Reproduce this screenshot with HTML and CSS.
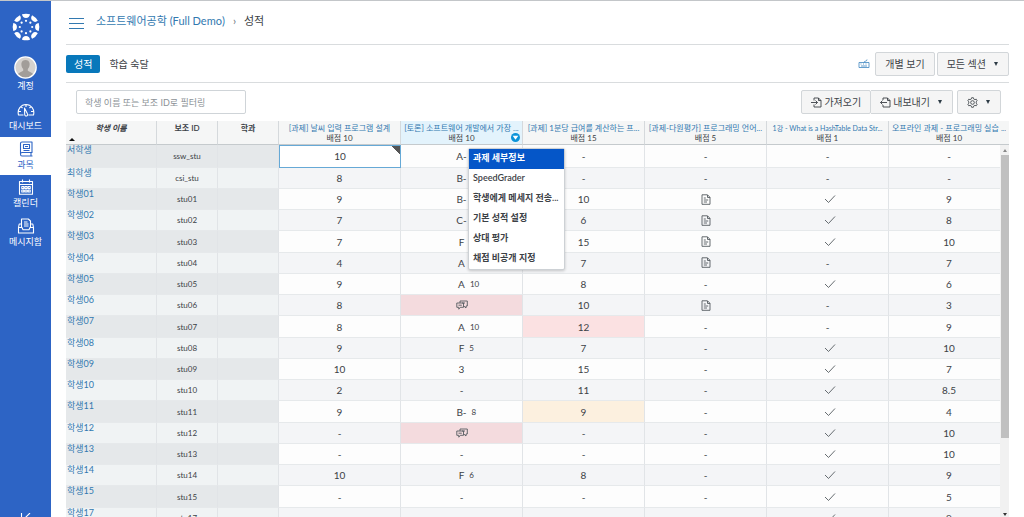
FILE: index.html
```html
<!DOCTYPE html>
<html lang="ko">
<head>
<meta charset="utf-8">
<title>성적</title>
<link rel="stylesheet" href="styles.css">
</head>
<body>
<svg class="defs" aria-hidden="true">
  <symbol id="check" viewBox="0 0 12 10"><path d="M1 5l3.5 3.5L11 1.500"/></symbol>
  <symbol id="doc" viewBox="0 0 10 11"><path d="M1 .8h5.500L9 3.300v7H1zM6.500 1v2.500H9M2.800 4h2M2.800 6h4.400M2.800 8h3.200"/></symbol>
  <symbol id="talk" viewBox="0 0 12 10"><path d="M4 3V1h7.300v5H10v2L8 6.200M.8 3h6.700v4.300H4.300L2.800 9.200V7.300h-2zM2.500 5.200h3.300M6 3h3"/></symbol>
</svg>
<div class="app">
  <nav class="sidebar">
    <a class="brand" href="#" aria-label="Canvas">
      <svg viewBox="0 0 28 28"><g fill="#fff">
        <g id="lobe"><path d="M10 1.300a13.400 13.400 0 0 1 8 0a4.050 4.300 0 0 1-8 0z"/><circle cx="14" cy="7.800" r="1.100"/></g>
        <use href="#lobe" transform="rotate(45 14 14)"/><use href="#lobe" transform="rotate(90 14 14)"/><use href="#lobe" transform="rotate(135 14 14)"/><use href="#lobe" transform="rotate(180 14 14)"/><use href="#lobe" transform="rotate(225 14 14)"/><use href="#lobe" transform="rotate(270 14 14)"/><use href="#lobe" transform="rotate(315 14 14)"/>
      </g></svg>
    </a>
    <a class="nav-item account" href="#">
      <svg viewBox="0 0 22 22"><circle cx="11" cy="11" r="10" fill="#d5d1ce"/><path d="M3.500 17.500c1-2 4-2.200 5.300-3.500v-1.500C7.300 11 6.900 9 7.100 7c.3-4.300 7.500-4.300 7.800 0 .2 2-.2 4-1.700 5.500V14c1.300 1.300 4.300 1.500 5.300 3.500-3.500 4.400-11.500 4.400-15 0z" fill="#a29d99"/><circle cx="11" cy="11" r="10.200" fill="none" stroke="#fff" stroke-width="1.300"/></svg>
      <span>계정</span>
    </a>
    <a class="nav-item" href="#">
      <svg viewBox="0 0 18 16" class="line"><path d="M3.500 13H1.500C0 7.500 4 2.500 9 2.500S18 7.500 16.500 13H11.500M3.500 13H6.500M9 5V2.500M4 9.500H1.500M14 9.500h2.500M5.500 6L4 4.500M12.500 6L14 4.500"/><path d="M7.500 6l2.800 5.500a1.500 1.500 0 1 1-2.600.8z"/></svg>
      <span>대시보드</span>
    </a>
    <a class="nav-item active" href="#" aria-current="page">
      <svg viewBox="0 0 18 16" class="line"><path d="M3.500 13V2.500C3.500 1.500 4 1 5 1h10v10.500H5C3 11.500 3 15 5 15H15.500M14 11.500V15M6.500 3.500h6v4h-6zM8 5.500h3M6.500 9.500h6"/></svg>
      <span>과목</span>
    </a>
    <a class="nav-item" href="#">
      <svg viewBox="0 0 18 16" class="line"><path d="M2.500 2.500h13v12.800h-13zM2.500 5.500h13M5.500.5v3M12.500.5v3M4.800 7.500h2v2h-2zM8 7.500h2v2H8zM11.200 7.500h2v2h-2zM4.800 11h2v2h-2zM8 11h2v2H8zM11.200 11h2v2h-2z"/></svg>
      <span>캘린더</span>
    </a>
    <a class="nav-item" href="#">
      <svg viewBox="0 0 18 16" class="line"><path d="M4.500 9V1h6.800l2.200 2v6M4.500 6H2.200L1.500 9.500V15h15V9.500L15.800 6h-2.300M1.500 9.500H5l1 2.300h6l1-2.300h3.500M7 4h3.500M7 6h4.500M7 8h4.500"/></svg>
      <span>메시지함</span>
    </a>
    <button class="collapse" aria-label="메뉴 접기"><svg viewBox="0 0 12 12" class="line"><path d="M1.500 0v12M10 0L4 6l6 6"/></svg></button>
  </nav>

  <main class="content">
    <header class="crumbs">
      <button class="menu-toggle" aria-label="과목 메뉴"><i></i><i></i><i></i></button>
      <a href="#">소프트웨어공학 (Full Demo)</a>
      <span class="sep">›</span>
      <span>성적</span>
    </header>

    <div class="tabs">
      <a class="tab selected" href="#">성적</a>
      <a class="tab" href="#">학습 숙달</a>
      <svg class="keyboard" viewBox="0 0 12 9"><path d="M1 3.500h10v5H1zM6 3.500C6 1.500 9 3 9 .5M2.500 5h1M5 5h1M7.500 5h1M3 7h6"/></svg>
      <button class="btn">개별 보기</button>
      <button class="btn">모든 섹션<span class="caret"></span></button>
    </div>

    <div class="toolbar">
      <input class="filter" type="text" aria-label="학생 필터" placeholder="학생 이름 또는 보조 ID로 필터링">
      <div class="group">
        <button class="btn"><svg viewBox="0 0 11 11"><path d="M3 3.500V1h4.500l2.500 2.500V10H3V7.500M7.500 1v2.500H10M0 5.500h6.500M4.500 3.500l2 2-2 2"/></svg>가져오기</button>
        <button class="btn"><svg viewBox="0 0 11 11"><path d="M3 3V1h4.500l2.500 2.500V10H3V8M7.500 1v2.500H10M.5 5.500H7M2.500 3.500l-2 2 2 2"/></svg>내보내기<span class="caret"></span></button>
      </div>
      <button class="btn" aria-label="설정"><svg viewBox="0 0 12 12"><path d="M5 .8h2l.4 1.500 1.200.6 1.500-.5 1 1.800L10 5.300v1.400l1.100 1.100-1 1.800-1.500-.5-1.200.6L7 11.200H5l-.4-1.500-1.200-.6-1.500.5-1-1.800L2 6.700V5.300L.9 4.200l1-1.800 1.500.5 1.200-.6z"/><circle cx="6" cy="6" r="2"/></svg><span class="caret"></span></button>
    </div>

    <div class="gradebook">
      <table class="grid">
        <colgroup><col class="c-name"><col class="c-id"><col class="c-id"><col class="c-task"><col class="c-task"><col class="c-task"><col class="c-task"><col class="c-task"><col></colgroup>
        <thead>
          <tr>
            <th class="plain name-head"><em>학생 이름</em><span class="sort"></span></th>
            <th class="plain">보조 ID</th>
            <th class="plain">학과</th>
            <th><a href="#">[과제] 날씨 입력 프로그램 설계</a><small>배점 10</small></th>
            <th class="open"><a href="#">[토론] 소프트웨어 개발에서 가장 ...</a><small>배점 10</small>
              <button class="drop" aria-label="과제 메뉴" aria-expanded="true"><svg viewBox="0 0 8 8"><path d="M1.500 2.500h5L4 6z" fill="#fff"/></svg></button>
              <ul class="menu">
                <li><button class="on">과제 세부정보</button></li>
                <li><button>SpeedGrader</button></li>
                <li><button>학생에게 메세지 전송...</button></li>
                <li><button>기본 성적 설정</button></li>
                <li><button>상대 평가</button></li>
                <li><button>채점 비공개 지정</button></li>
              </ul>
            </th>
            <th><a href="#">[과제] 1분당 급여를 계산하는 프...</a><small>배점 15</small></th>
            <th><a href="#">[과제-다원평가] 프로그래밍 언어...</a><small>배점 5</small></th>
            <th><a class="long" href="#">1강 - What is a HashTable Data Str...</a><small>배점 1</small></th>
            <th><a href="#">오프라인 과제 - 프로그래밍 실습 ...</a><small>배점 10</small></th>
          </tr>
        </thead>
        <tbody>
          <tr><td><a href="#">서학생</a></td><td>ssw_stu</td><td></td><td class="focus">10</td><td><div class="letter"><b>A-</b></div></td><td>-</td><td>-</td><td>-</td><td>-</td></tr>
          <tr><td><a href="#">최학생</a></td><td>csi_stu</td><td></td><td>8</td><td><div class="letter"><b>B-</b></div></td><td>-</td><td>-</td><td>-</td><td>-</td></tr>
          <tr><td><a href="#">학생01</a></td><td>stu01</td><td></td><td>9</td><td><div class="letter"><b>B-</b></div></td><td>10</td><td><svg class="doc"><use href="#doc"/></svg></td><td><svg class="check"><use href="#check"/></svg></td><td>9</td></tr>
          <tr><td><a href="#">학생02</a></td><td>stu02</td><td></td><td>7</td><td><div class="letter"><b>C-</b></div></td><td>6</td><td><svg class="doc"><use href="#doc"/></svg></td><td><svg class="check"><use href="#check"/></svg></td><td>8</td></tr>
          <tr><td><a href="#">학생03</a></td><td>stu03</td><td></td><td>7</td><td><div class="letter"><b>F</b></div></td><td>15</td><td><svg class="doc"><use href="#doc"/></svg></td><td><svg class="check"><use href="#check"/></svg></td><td>10</td></tr>
          <tr><td><a href="#">학생04</a></td><td>stu04</td><td></td><td>4</td><td><div class="letter"><b>A</b></div></td><td>7</td><td><svg class="doc"><use href="#doc"/></svg></td><td>-</td><td>7</td></tr>
          <tr><td><a href="#">학생05</a></td><td>stu05</td><td></td><td>9</td><td><div class="letter"><b>A</b><small>10</small></div></td><td>8</td><td>-</td><td><svg class="check"><use href="#check"/></svg></td><td>6</td></tr>
          <tr><td><a href="#">학생06</a></td><td>stu06</td><td></td><td>8</td><td class="late"><svg class="talk"><use href="#talk"/></svg></td><td>10</td><td><svg class="doc"><use href="#doc"/></svg></td><td>-</td><td>3</td></tr>
          <tr><td><a href="#">학생07</a></td><td>stu07</td><td></td><td>8</td><td><div class="letter"><b>A</b><small>10</small></div></td><td class="late-light">12</td><td>-</td><td>-</td><td>9</td></tr>
          <tr><td><a href="#">학생08</a></td><td>stu08</td><td></td><td>9</td><td><div class="letter"><b>F</b><small>5</small></div></td><td>7</td><td>-</td><td><svg class="check"><use href="#check"/></svg></td><td>10</td></tr>
          <tr><td><a href="#">학생09</a></td><td>stu09</td><td></td><td>10</td><td>3</td><td>15</td><td>-</td><td><svg class="check"><use href="#check"/></svg></td><td>7</td></tr>
          <tr><td><a href="#">학생10</a></td><td>stu10</td><td></td><td>2</td><td>-</td><td>11</td><td>-</td><td><svg class="check"><use href="#check"/></svg></td><td>8.5</td></tr>
          <tr><td><a href="#">학생11</a></td><td>stu11</td><td></td><td>9</td><td><div class="letter"><b>B-</b><small>8</small></div></td><td class="resubmitted">9</td><td>-</td><td><svg class="check"><use href="#check"/></svg></td><td>4</td></tr>
          <tr><td><a href="#">학생12</a></td><td>stu12</td><td></td><td>-</td><td class="late"><svg class="talk"><use href="#talk"/></svg></td><td>-</td><td>-</td><td><svg class="check"><use href="#check"/></svg></td><td>10</td></tr>
          <tr><td><a href="#">학생13</a></td><td>stu13</td><td></td><td>-</td><td>-</td><td>-</td><td>-</td><td><svg class="check"><use href="#check"/></svg></td><td>10</td></tr>
          <tr><td><a href="#">학생14</a></td><td>stu14</td><td></td><td>10</td><td><div class="letter"><b>F</b><small>6</small></div></td><td>8</td><td>-</td><td><svg class="check"><use href="#check"/></svg></td><td>9</td></tr>
          <tr><td><a href="#">학생15</a></td><td>stu15</td><td></td><td>-</td><td>-</td><td>-</td><td>-</td><td><svg class="check"><use href="#check"/></svg></td><td>5</td></tr>
          <tr><td><a href="#">학생17</a></td><td>stu17</td><td></td><td>-</td><td>-</td><td>-</td><td>-</td><td><svg class="check"><use href="#check"/></svg></td><td>9</td></tr>
        </tbody>
      </table>
      <div class="scrollbar" aria-hidden="true"><span class="up"></span><div class="thumb"></div><span class="down"></span></div>
    </div>
  </main>
</div>
</body>
</html>
```
FILE: styles.css
```css
* { box-sizing: border-box; }
body {
  margin: 0;
  font-family: Lato, "Noto Sans CJK KR", sans-serif;
  font-size: 10px;
  line-height: 14px;
  color: #3c4146;
  background: #fff;
}
a { color: #3279b0; text-decoration: none; }
button { font: inherit; color: inherit; border: 0; background: none; padding: 0; cursor: pointer; }
svg { display: block; fill: none; stroke: none; }
.defs { position: absolute; width: 0; height: 0; }
.app { display: flex; height: 100vh; overflow: hidden; border-top: 1px solid #c3c6c9; }

/* Global navigation */
.sidebar {
  flex: none;
  width: 51px;
  display: flex;
  flex-direction: column;
  background: #2d64c5;
}
.brand { display: flex; justify-content: center; padding: 12px 0 13px; }
.brand svg { width: 28px; height: 28px; }
.nav-item {
  display: flex;
  flex-direction: column;
  align-items: center;
  padding: 4px 0 2px;
  height: 39px;
  font-size: 9px;
  line-height: 14px;
  color: #fff;
  white-space: nowrap;
}
.nav-item svg { flex: none; width: 18px; height: 16px; margin-bottom: 1px; }
.nav-item.account { height: 44px; padding-top: 2px; }
.nav-item.account svg { width: 23px; height: 23px; margin-bottom: 0; }
.nav-item.active { background: #fff; color: #2d64c5; height: 38px; }
.line path { stroke: currentColor; stroke-width: 1.1; stroke-linejoin: round; }
.collapse { margin-top: auto; align-self: center; height: 4px; overflow: hidden; color: #fff; }
.collapse svg { width: 12px; height: 12px; }

/* Page header */
.content { flex: 1; min-width: 0; padding: 0 15px; }
.crumbs {
  display: flex;
  align-items: center;
  height: 44px;
  font-size: 11px;
  border-bottom: 1px solid #d9dcde;
  padding: 0 3px 3px;
}
.menu-toggle { display: flex; flex-direction: column; gap: 4px; width: 15px; margin: 4px 12px 0 0; }
.menu-toggle i { height: 1px; background: #3279b0; }
.sep { margin: 0 8px; color: #6b7278; }
.tabs { display: flex; align-items: center; height: 38px; border-bottom: 1px solid #d9dcde; }
.tab { font-size: 10px; color: #3c4146; padding: 2px 9px; }
.tab.selected { background: #0878bb; color: #fff; border-radius: 2px; padding: 2px 8px; }
.keyboard { width: 12px; height: 9px; margin-left: auto; margin-right: 5px; }
.keyboard path { stroke: #3f86c0; stroke-width: 0.8; }
.btn {
  display: inline-flex;
  align-items: center;
  height: 24px;
  padding: 0 9px;
  font-size: 10px;
  background: #f5f5f5;
  border: 1px solid #d2d6d9;
  border-radius: 2px;
  white-space: nowrap;
}
.btn svg { width: 11px; height: 11px; }
.group .btn svg { margin-right: 2px; }
.btn path, .btn circle { stroke: #3c4146; stroke-width: 0.9; }
.tabs .btn + .btn { margin-left: 2px; }
.caret { margin: 0 1px 0 8px; border: 2px solid transparent; border-top: 4px solid #2d3b45; border-bottom: 0; }
.toolbar { display: flex; align-items: center; height: 38px; padding: 0 8px 0 10px; gap: 4px; }
.filter {
  width: 170px;
  height: 24px;
  padding: 0 8px;
  font: inherit;
  font-size: 9px;
  border: 1px solid #cfd4d8;
  border-radius: 2px;
}
.filter::placeholder { color: #8b9196; opacity: 1; }
.group { display: flex; margin-left: auto; }
.group .btn + .btn { border-left: 0; border-radius: 0 2px 2px 0; }

/* Gradebook */
.gradebook { position: relative; height: calc(100vh - 121px); overflow: hidden; }
.grid { width: 100%; height: 408px; table-layout: fixed; border-collapse: separate; border-spacing: 0; }
.c-name { width: 91px; }
.c-id { width: 61px; }
.c-task { width: 122px; }
th {
  position: relative;
  height: 24px;
  padding: 2px 3px 0;
  font-size: 8px;
  font-weight: 400;
  line-height: 10px;
  vertical-align: top;
  background: #f5f6f6;
  border-right: 1px solid #d5d9dc;
  border-bottom: 1px solid #c5cacd;
}
th > a { display: block; overflow: hidden; white-space: nowrap; }
th > a.long { font-size: 7px; }
th small { display: block; font-size: 8px; }
th.plain { font-weight: 600; }
th.open { background: #e3f3fc; }
th:last-child, td:last-child { border-right: 0; }
.sort { position: absolute; left: 3px; bottom: 3px; border: 3px solid transparent; border-top: 0; border-bottom: 3px solid #111; }
.drop { position: absolute; right: 2px; bottom: 2px; width: 9px; height: 9px; border-radius: 50%; background: #0b93d8; }
.drop svg { width: 9px; height: 9px; }
.menu {
  position: absolute;
  z-index: 2;
  top: 27px;
  left: 67px;
  width: 97px;
  margin: 0;
  padding: 0;
  list-style: none;
  background: #fff;
  border: 1px solid #cdd1d5;
  border-radius: 2px;
  box-shadow: 0 1px 3px #0003;
}
.menu button { display: block; width: 100%; height: 20px; padding: 0 4px 2px; text-align: left; font-size: 9px; font-weight: 600; white-space: nowrap; }
.menu button.on { background: #0556c8; color: #fff; }
td {
  padding: 0;
  text-align: center;
  line-height: 14px;
  vertical-align: middle;
  border-right: 1px solid #e1e4e7;
  border-bottom: 1px solid #e6e9eb;
  background: #fdfdfd;
}
tr:nth-child(even) td { background: #f4f5f7; }
td:nth-child(-n+3) { background: #e5e8ea; font-size: 8px; }
tr:nth-child(even) td:nth-child(-n+3) { background: #f0f3f4; }
td:first-child { text-align: left; vertical-align: top; line-height: 9px; padding-left: 1px; font-size: 9px; }
td svg { margin: 0 auto; }
td use { stroke: #555b60; stroke-width: 0.9; }
.check { width: 16px; height: 10px; padding-left: 4px; }
.doc { width: 10px; height: 11px; }
.talk { width: 12px; height: 10px; }
.letter { display: grid; grid-template-columns: 1fr auto 1fr; column-gap: 5px; }
.letter b { grid-column: 2; font-weight: 400; }
.letter small { text-align: left; font-size: 8px; }
td.focus { border: 1px solid #66a9d6; background: linear-gradient(225deg, #555 6px, #fff 6px); }
tbody tr td.late { background: #f4dbde; }
tbody tr td.late-light { background: #fbe1e2; }
tbody tr td.resubmitted { background: #fcf0df; }
.scrollbar {
  position: absolute;
  top: 24px;
  right: 0;
  bottom: 0;
  width: 9px;
  display: flex;
  flex-direction: column;
  align-items: center;
  background: #f1f1f1;
}
.thumb { width: 8px; height: 76%; background: #c0c0c0; }
.up { margin: 4px 0 3px; border: 2px solid transparent; border-top: 0; border-bottom: 3px solid #888; }
.down { margin: auto 0 1px; border: 2px solid transparent; border-bottom: 0; border-top: 3px solid #333; }
```
